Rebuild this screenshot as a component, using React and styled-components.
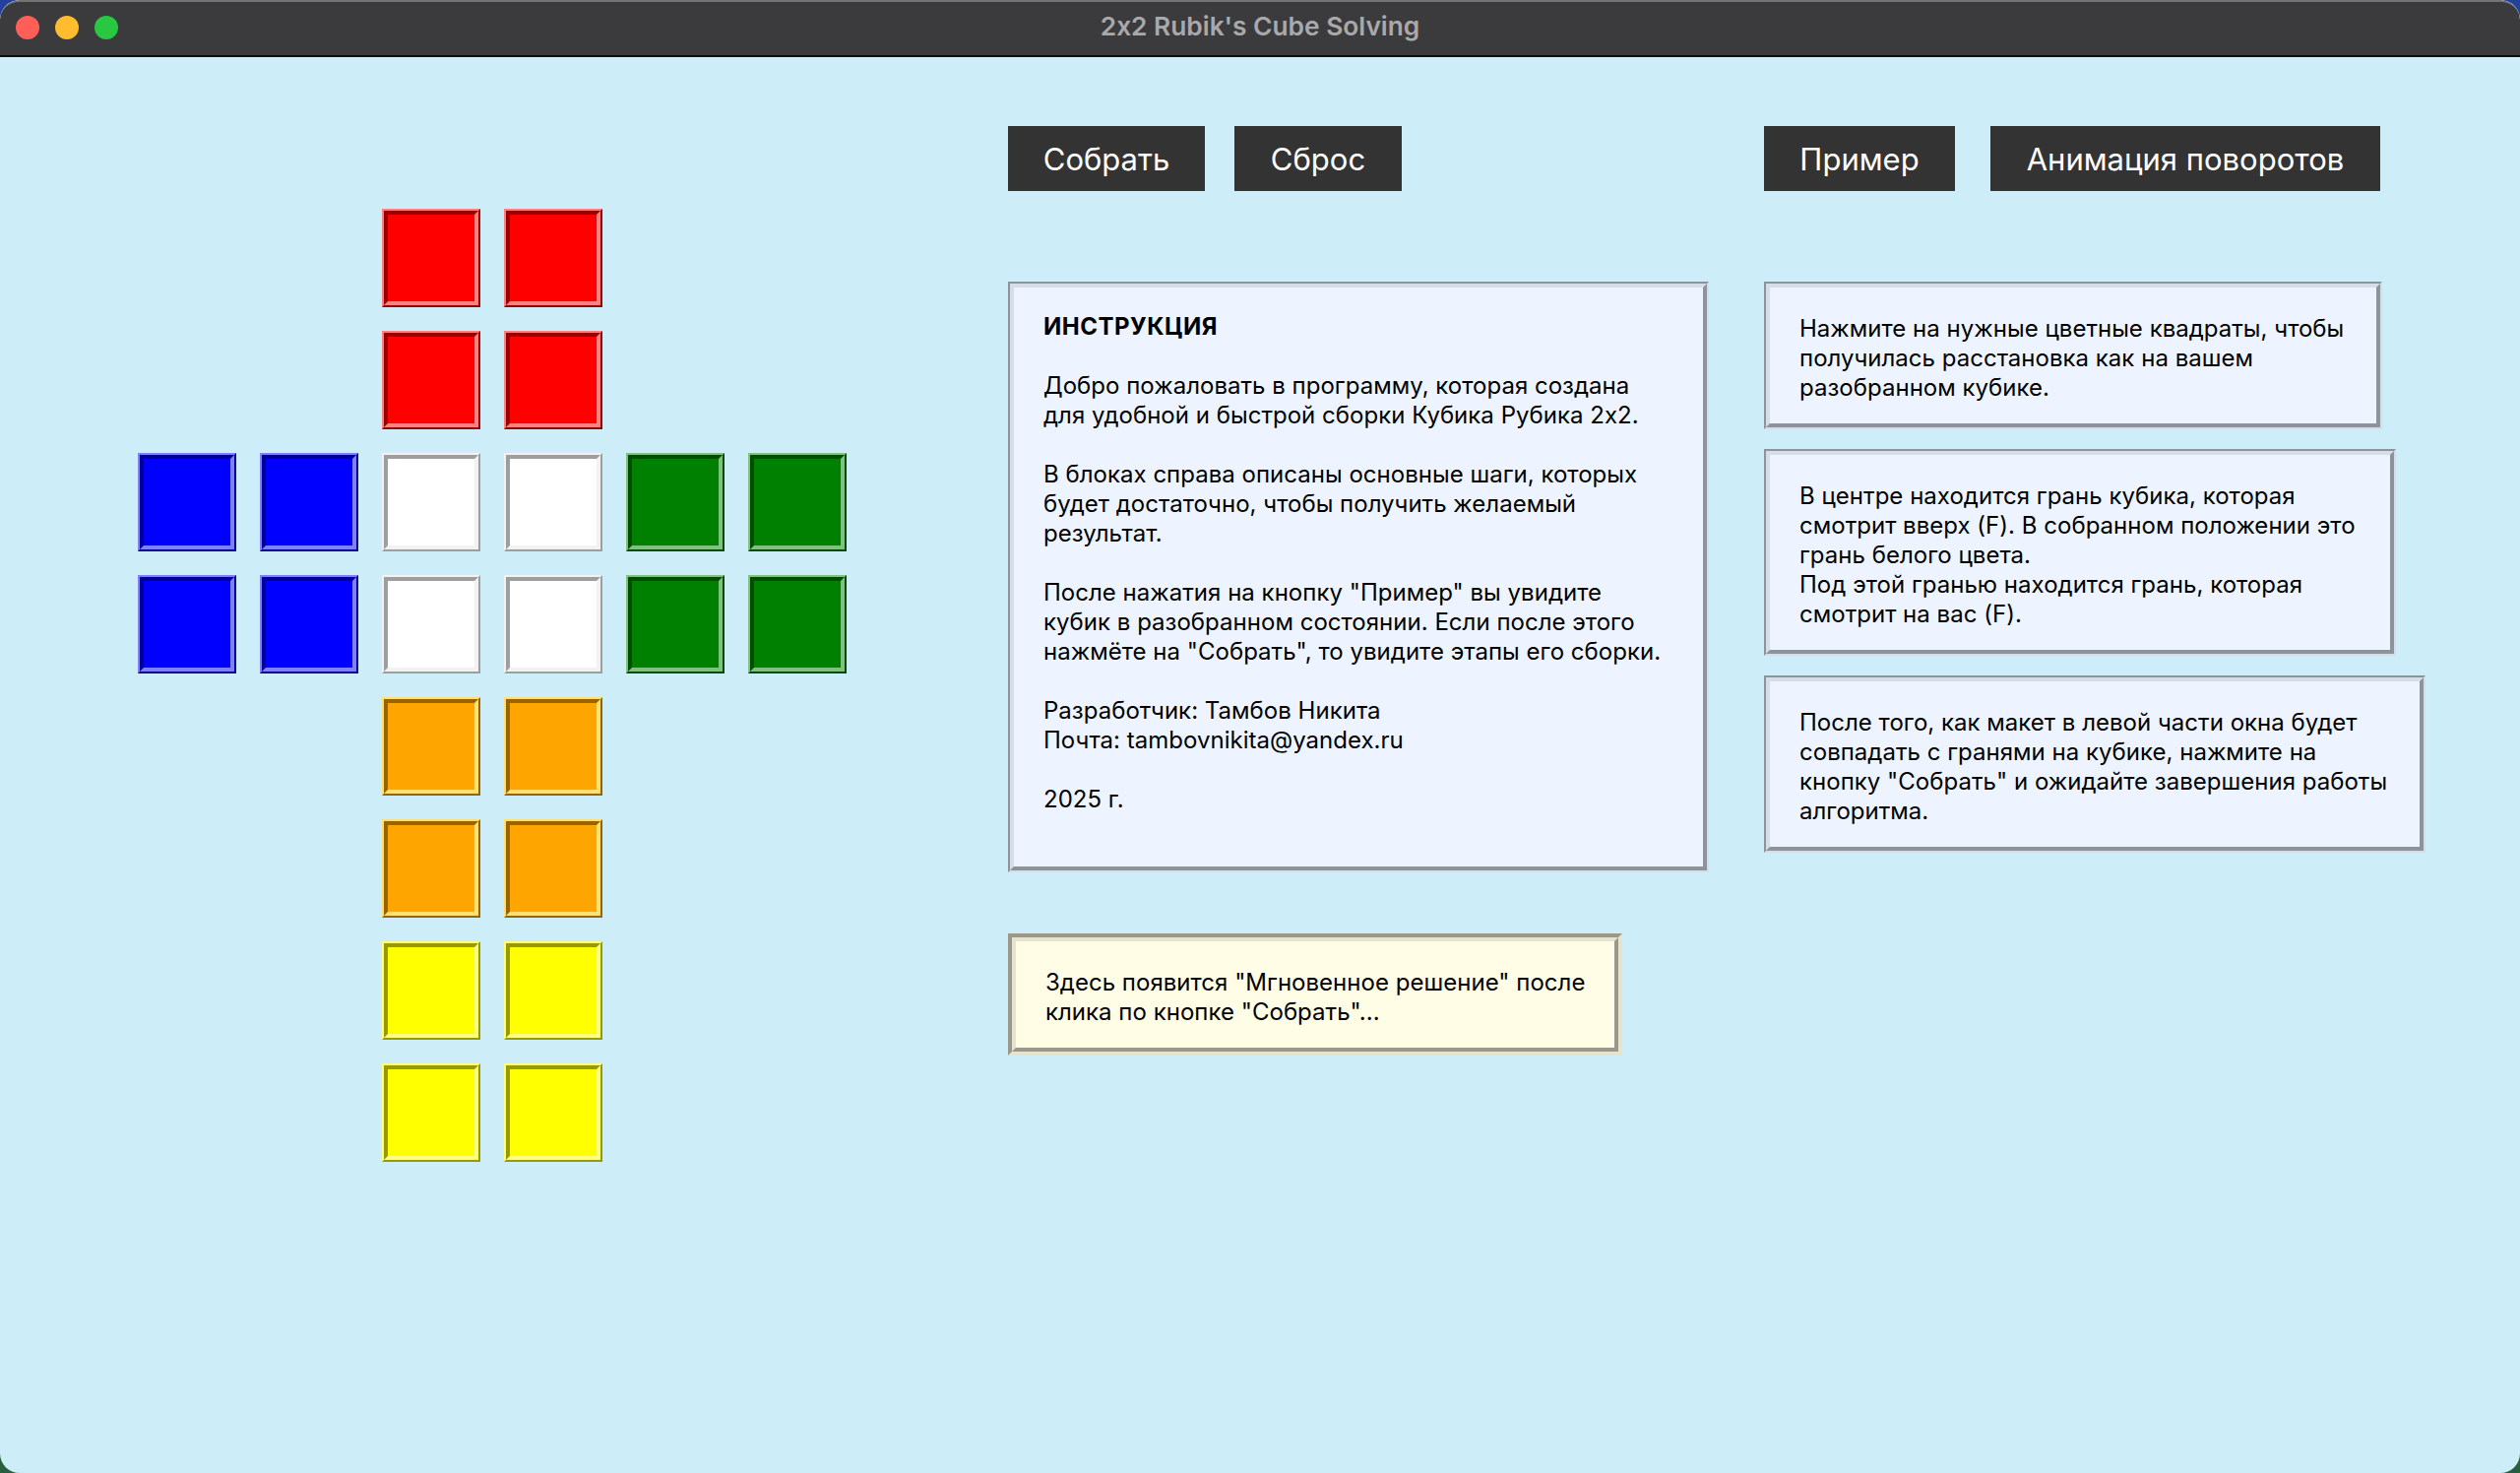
import React from 'react';
import styled, { createGlobalStyle } from 'styled-components';

const GlobalStyle = createGlobalStyle`
  html, body {
    margin: 0;
    padding: 0;
    height: 100%;
    background: linear-gradient(180deg, #24409c 0%, #24409c 50%, #2a5f3e 50%, #2a5f3e 100%);
  }
  #root {
    height: 100%;
  }
`;

const SHADES = {
  red: { face: '#ff0000', light: '#ff8080', dark: '#990000' },
  blue: { face: '#0000ff', light: '#8080ff', dark: '#000099' },
  white: { face: '#ffffff', light: '#f2f2f2', dark: '#9e9e9e' },
  green: { face: '#008000', light: '#80c080', dark: '#004d00' },
  orange: { face: '#ffa500', light: '#ffe070', dark: '#996300' },
  yellow: { face: '#ffff00', light: '#ffff80', dark: '#999900' },
};

const PANELS = {
  info: { face: '#edf4ff', light: '#d6dde9', dark: '#8c9399', edge: 2 },
  note: { face: '#fffde6', light: '#e6e4cf', dark: '#9a988a', edge: 4 },
};

const Window = styled.div`
  height: 1496px;
  display: flex;
  flex-direction: column;
  border-radius: 20px;
  overflow: hidden;
  background: #cdedf9;
  font-family: Inter, "Noto Sans", sans-serif;
  font-feature-settings: "calt" 0;
`;

const TitleBar = styled.header`
  flex: none;
  height: 58px;
  box-sizing: border-box;
  position: relative;
  display: flex;
  align-items: center;
  justify-content: center;
  padding-bottom: 6px;
  background: #3b3b3d;
  border-top: 2px solid #737374;
  border-bottom: 2px solid #0c0c0c;
  border-radius: 20px 20px 0 0;
`;

const Lights = styled.div`
  position: absolute;
  left: 16px;
  top: 14px;
  display: flex;
  gap: 16px;
`;

const Light = styled.span`
  width: 24px;
  height: 24px;
  border-radius: 50%;
  background: ${(p) => p.$color};
`;

const Title = styled.h1`
  margin: 0;
  font-size: 26.3px;
  font-weight: 600;
  color: #a9a9ab;
`;

const Main = styled.main`
  flex: 1;
  display: flex;
  padding: 70px 0 0 140px;
`;

const Cube = styled.div`
  flex: none;
  width: 884px;
  margin-top: 84px;
  display: grid;
  grid-template-columns: repeat(6, 100px);
  grid-auto-rows: 100px;
  gap: 24px;
  align-content: start;
`;

const Sticker = styled.button`
  padding: 0;
  box-sizing: border-box;
  grid-column: ${(p) => p.$col};
  grid-row: ${(p) => p.$row};
  width: 100px;
  height: 100px;
  border-style: solid;
  border-width: 2px;
  border-color: ${(p) => `${SHADES[p.$tone].light} ${SHADES[p.$tone].dark} ${SHADES[p.$tone].dark} ${SHADES[p.$tone].light}`};
  background: ${(p) => SHADES[p.$tone].face};
`;

const StickerFace = styled.span`
  display: block;
  box-sizing: border-box;
  height: 100%;
  border-style: solid;
  border-width: 4px;
  border-color: ${(p) => `${SHADES[p.$tone].dark} ${SHADES[p.$tone].light} ${SHADES[p.$tone].light} ${SHADES[p.$tone].dark}`};
`;

const Columns = styled.div`
  display: grid;
  grid-template-columns: 768px 1fr;
  align-content: start;
  row-gap: 92px;
`;

const Buttons = styled.div`
  display: flex;
  gap: ${(p) => p.$gap}px;
`;

const Button = styled.button`
  height: 66px;
  width: ${(p) => p.$width}px;
  padding: 1px 0 0;
  border: 0;
  background: #333333;
  color: #ffffff;
  font-family: inherit;
  font-feature-settings: inherit;
  font-size: 31px;
  font-weight: 400;
`;

const Stack = styled.div`
  display: flex;
  flex-direction: column;
  align-items: flex-start;
  gap: ${(p) => p.$gap}px;
`;

const Panel = styled.section`
  box-sizing: border-box;
  width: ${(p) => p.$width}px;
  border-style: solid;
  border-width: ${(p) => PANELS[p.$kind].edge}px;
  border-color: ${(p) => `${PANELS[p.$kind].dark} ${PANELS[p.$kind].light} ${PANELS[p.$kind].light} ${PANELS[p.$kind].dark}`};
  background: ${(p) => PANELS[p.$kind].face};
`;

const PanelBody = styled.div`
  border-style: solid;
  border-width: 4px;
  border-color: ${(p) => `${PANELS[p.$kind].light} ${PANELS[p.$kind].dark} ${PANELS[p.$kind].dark} ${PANELS[p.$kind].light}`};
  padding: ${(p) => (p.$low ? '27px 30px 21px' : '25px 30px 23px')};
  color: #000000;
  font-size: 24px;
  line-height: 30px;
  letter-spacing: 0.02px;
`;

const Heading = styled.h2`
  margin: 0 0 30px;
  font-size: 24px;
  line-height: 30px;
  font-weight: 700;
  letter-spacing: 0.5px;
`;

const Para = styled.p`
  margin: 0 0 ${(p) => (p.$spaced ? 30 : 0)}px;
  white-space: pre;
`;

const tones = [
  ['red', 3, 1], ['red', 4, 1], ['red', 3, 2], ['red', 4, 2],
  ['blue', 1, 3], ['blue', 2, 3], ['blue', 1, 4], ['blue', 2, 4],
  ['white', 3, 3], ['white', 4, 3], ['white', 3, 4], ['white', 4, 4],
  ['green', 5, 3], ['green', 6, 3], ['green', 5, 4], ['green', 6, 4],
  ['orange', 3, 5], ['orange', 4, 5], ['orange', 3, 6], ['orange', 4, 6],
  ['yellow', 3, 7], ['yellow', 4, 7], ['yellow', 3, 8], ['yellow', 4, 8],
];

const App = () => (
  <>
    <GlobalStyle />
    <Window>
      <TitleBar>
        <Lights>
          <Light $color="#ff5f57" />
          <Light $color="#febc2e" />
          <Light $color="#28c840" />
        </Lights>
        <Title>2x2 Rubik's Cube Solving</Title>
      </TitleBar>
      <Main>
        <Cube>
          {tones.map(([tone, col, row]) => (
            <Sticker key={`${col}-${row}`} $tone={tone} $col={col} $row={row}>
              <StickerFace $tone={tone} />
            </Sticker>
          ))}
        </Cube>
        <Columns>
          <Buttons $gap={30}>
            <Button $width={200}>Собрать</Button>
            <Button $width={170}>Сброс</Button>
          </Buttons>
          <Buttons $gap={36}>
            <Button $width={194}>Пример</Button>
            <Button $width={396}>Анимация поворотов</Button>
          </Buttons>
          <Stack $gap={62}>
            <Panel $kind="info" $width={712}>
              <PanelBody $kind="info">
                <Heading>ИНСТРУКЦИЯ</Heading>
                <Para $spaced>{'Добро пожаловать в программу, которая создана\nдля удобной и быстрой сборки Кубика Рубика 2x2.'}</Para>
                <Para $spaced>{'В блоках справа описаны основные шаги, которых\nбудет достаточно, чтобы получить желаемый\nрезультат.'}</Para>
                <Para $spaced>{'После нажатия на кнопку "Пример" вы увидите\nкубик в разобранном состоянии. Если после этого\nнажмёте на "Собрать", то увидите этапы его сборки.'}</Para>
                <Para $spaced>{'Разработчик: Тамбов Никита\nПочта: tambovnikita@yandex.ru'}</Para>
                <Para $spaced>2025 г.</Para>
              </PanelBody>
            </Panel>
            <Panel $kind="note" $width={624}>
              <PanelBody $kind="note" $low>
                <Para>{'Здесь появится "Мгновенное решение" после\nклика по кнопке "Собрать"...'}</Para>
              </PanelBody>
            </Panel>
          </Stack>
          <Stack $gap={20}>
            <Panel $kind="info" $width={628}>
              <PanelBody $kind="info" $low>
                <Para>{'Нажмите на нужные цветные квадраты, чтобы\nполучилась расстановка как на вашем\nразобранном кубике.'}</Para>
              </PanelBody>
            </Panel>
            <Panel $kind="info" $width={642}>
              <PanelBody $kind="info" $low>
                <Para>{'В центре находится грань кубика, которая\nсмотрит вверх (F). В собранном положении это\nгрань белого цвета.\nПод этой гранью находится грань, которая\nсмотрит на вас (F).'}</Para>
              </PanelBody>
            </Panel>
            <Panel $kind="info" $width={672}>
              <PanelBody $kind="info" $low>
                <Para>{'После того, как макет в левой части окна будет\nсовпадать с гранями на кубике, нажмите на\nкнопку "Собрать" и ожидайте завершения работы\nалгоритма.'}</Para>
              </PanelBody>
            </Panel>
          </Stack>
        </Columns>
      </Main>
    </Window>
  </>
);

export default App;
